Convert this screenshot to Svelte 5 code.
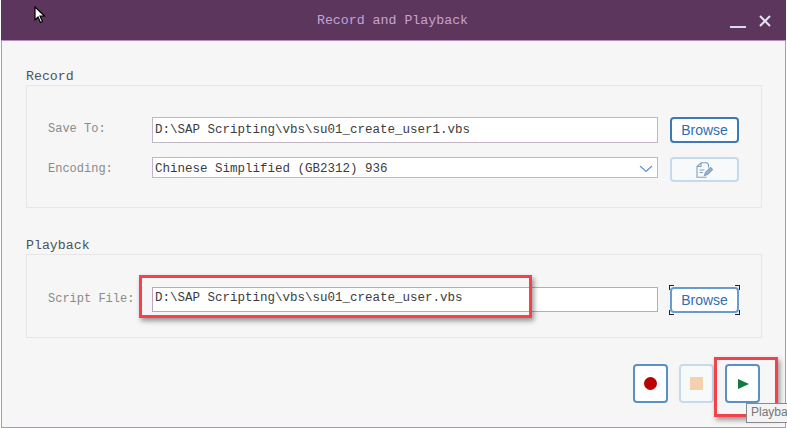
<script>
  const bottomButtons = ["record", "stop", "play"];
</script>

<div class="window">
  <header class="titlebar">
    <span class="title">Record and Playback</span>
    <div class="controls">
      <svg width="16" height="6" viewBox="0 0 16 6"><path d="M0 3h16" stroke="#d5dcec" stroke-width="2" /></svg>
      <svg width="12" height="12" viewBox="0 0 12 12"><path d="M1 1l10 10M11 1L1 11" stroke="#dfe5f2" stroke-width="2" /></svg>
    </div>
  </header>

  <main class="body">
    <section class="group record">
      <h2>Record</h2>
      <div class="box">
        <div class="row first">
          <span class="label">Save To:</span>
          <div class="field tall">D:\SAP Scripting\vbs\su01_create_user1.vbs</div>
          <button class="btn">Browse</button>
        </div>
        <div class="row second">
          <span class="label">Encoding:</span>
          <div class="field select">
            Chinese Simplified (GB2312) 936
            <svg width="14" height="8" viewBox="0 0 14 8"><path d="M1 1l6 5.5L13 1" fill="none" stroke="#5b8fd0" stroke-width="1.2" /></svg>
          </div>
          <button class="btn disabled" aria-label="Edit">
            <svg width="17" height="16" viewBox="0 0 17 16" fill="none" stroke="#7f9ebf" stroke-width="1.1">
              <path d="M5 .8h6l1.5 1.7v3M5 .8L1 4.5v10.7h9.5" />
              <path d="M1 4.5h4V.8" />
              <path d="M3.5 8h5M3.5 10.5h3.5" />
              <path d="M8.5 13.5l1-3 5-5 2 2-5 5z" fill="#9db6d0" />
            </svg>
          </button>
        </div>
      </div>
    </section>

    <section class="group playback">
      <h2>Playback</h2>
      <div class="box">
        <div class="row only">
          <span class="label">Script File:</span>
          <div class="field tall script">D:\SAP Scripting\vbs\su01_create_user.vbs</div>
          <button class="btn focused">
            Browse
            <i class="tick tl"></i><i class="tick tr"></i><i class="tick bl"></i><i class="tick br"></i>
          </button>
        </div>
      </div>
    </section>

    <div class="actions">
      {#each bottomButtons as kind}
        <button class="square {kind}" aria-label={kind}><span class="glyph"></span></button>
      {/each}
    </div>
  </main>

  <div class="callout callout-field"></div>
  <div class="callout callout-play"></div>
  <div class="tooltip">Playba</div>

  <svg class="cursor" width="12" height="18" viewBox="0 0 12 18">
    <path d="M1 1v13l3-3 2.5 5.5 2-1L6 10h4.5z" fill="#fff" stroke="#000" stroke-width="1.2" />
  </svg>
</div>

<style>
  :global(body) {
    margin: 0;
    background: #fff;
  }

  .window {
    position: relative;
    box-sizing: border-box;
    width: 787px;
    height: 428px;
    margin: 0;
    padding: 0 1px 0 1px;
    overflow: hidden;
    font-family: "Liberation Mono", monospace;
  }

  .titlebar {
    position: relative;
    box-sizing: border-box;
    height: 41px;
    background: #5c365d;
    border-bottom: 1px solid #b88fbe;
    display: flex;
    align-items: center;
    justify-content: center;
    padding-right: 2px;
  }

  .title {
    color: #c9a3d3;
    font-size: 13.25px;
  }

  .controls {
    position: absolute;
    right: 15px;
    top: 15px;
    display: flex;
    align-items: flex-start;
    gap: 13px;
  }

  .controls svg:first-child {
    margin-top: 9px;
  }

  .body {
    box-sizing: border-box;
    height: 387px;
    background: #f6f6f6;
    border: solid #b88fbe;
    border-width: 0 1px 1px 1px;
    padding: 27px 23px 0 24px;
  }

  .group h2 {
    margin: 0;
    font-size: 13.25px;
    font-weight: 400;
    line-height: 17px;
    color: #4c5454;
  }

  .box {
    box-sizing: border-box;
    border: 1px solid #e6e6e6;
    background: #f6f6f6;
  }

  .record .box {
    height: 123px;
    padding-top: 31px;
  }

  .playback {
    margin-top: 29px;
  }

  .playback .box {
    height: 84px;
    padding-top: 32px;
  }

  .row {
    display: flex;
    align-items: flex-start;
    padding-left: 21px;
  }

  .row.second {
    margin-top: 14px;
  }

  .label {
    width: 104px;
    flex: none;
    font-size: 12px;
    line-height: 24px;
    color: #8a8a8a;
  }

  .field {
    box-sizing: border-box;
    width: 506px;
    height: 26px;
    flex: none;
    background: #fff;
    border: 1px solid #c2b6c4;
    padding: 0 2px;
    font-size: 12.5px;
    line-height: 24px;
    color: #3c3c3c;
    white-space: nowrap;
  }

  .script {
    height: 25px;
    border-color: #bda6c4;
    line-height: 20px;
  }

  .select {
    height: 21px;
    line-height: 15px;
    display: flex;
    align-items: center;
    justify-content: space-between;
    padding-top: 3px;
    padding-right: 4px;
  }

  .btn {
    position: relative;
    box-sizing: border-box;
    flex: none;
    width: 69px;
    height: 26px;
    margin-left: 12px;
    padding: 0;
    background: #fff;
    border: 2px solid #3a7ab9;
    border-radius: 4px;
    color: #2f6fb2;
    font-family: "Liberation Sans", sans-serif;
    font-size: 14px;
    display: flex;
    align-items: center;
    justify-content: center;
  }

  .btn.disabled {
    height: 25px;
    background: #f8f9fa;
    border-color: #c5daec;
  }

  .btn.focused {
    border-color: #6a9bd0;
  }

  .tick {
    position: absolute;
    width: 4px;
    height: 4px;
    border: solid #222;
    border-width: 0;
  }

  .tl {
    left: -3px;
    top: -4px;
    border-width: 1px 0 0 1px;
  }

  .tr {
    right: -3px;
    top: -4px;
    border-width: 1px 1px 0 0;
  }

  .bl {
    left: -3px;
    bottom: -4px;
    border-width: 0 0 1px 1px;
  }

  .br {
    right: -3px;
    bottom: -4px;
    border-width: 0 1px 1px 0;
  }

  .actions {
    display: flex;
    justify-content: flex-end;
    gap: 11px;
    margin-top: 26px;
    padding-right: 2px;
  }

  .square {
    box-sizing: border-box;
    width: 35px;
    height: 39px;
    padding: 0;
    background: #fff;
    border: 2px solid #5a90c8;
    border-radius: 4px;
    display: flex;
    align-items: center;
    justify-content: center;
  }

  .square.record .glyph {
    width: 13px;
    height: 13px;
    border-radius: 50%;
    background: #bb0000;
  }

  .square.stop {
    background: #f8f9fa;
    border-color: #c5daec;
  }

  .square.stop .glyph {
    width: 13px;
    height: 13px;
    background: #f5cfae;
  }

  .square.play .glyph {
    width: 0;
    height: 0;
    margin-left: 1px;
    border-left: 11px solid #107c3e;
    border-top: 5.5px solid transparent;
    border-bottom: 5.5px solid transparent;
  }

  .callout {
    position: absolute;
    box-sizing: border-box;
    border: 3px solid #f5424a;
    box-shadow: 2px 3px 5px rgba(0, 0, 0, 0.4);
  }

  .callout-field {
    left: 139px;
    top: 275px;
    width: 393px;
    height: 43px;
  }

  .callout-play {
    left: 714px;
    top: 357px;
    width: 64px;
    height: 60px;
  }

  .tooltip {
    position: absolute;
    left: 746px;
    top: 403px;
    box-sizing: border-box;
    width: 60px;
    height: 20px;
    padding-left: 4px;
    background: #f4f4f4;
    border: 1px solid #8a8a8a;
    color: #777;
    font-family: "Liberation Sans", sans-serif;
    font-size: 12px;
    line-height: 17px;
  }

  .cursor {
    position: absolute;
    left: 34px;
    top: 6px;
  }
</style>
